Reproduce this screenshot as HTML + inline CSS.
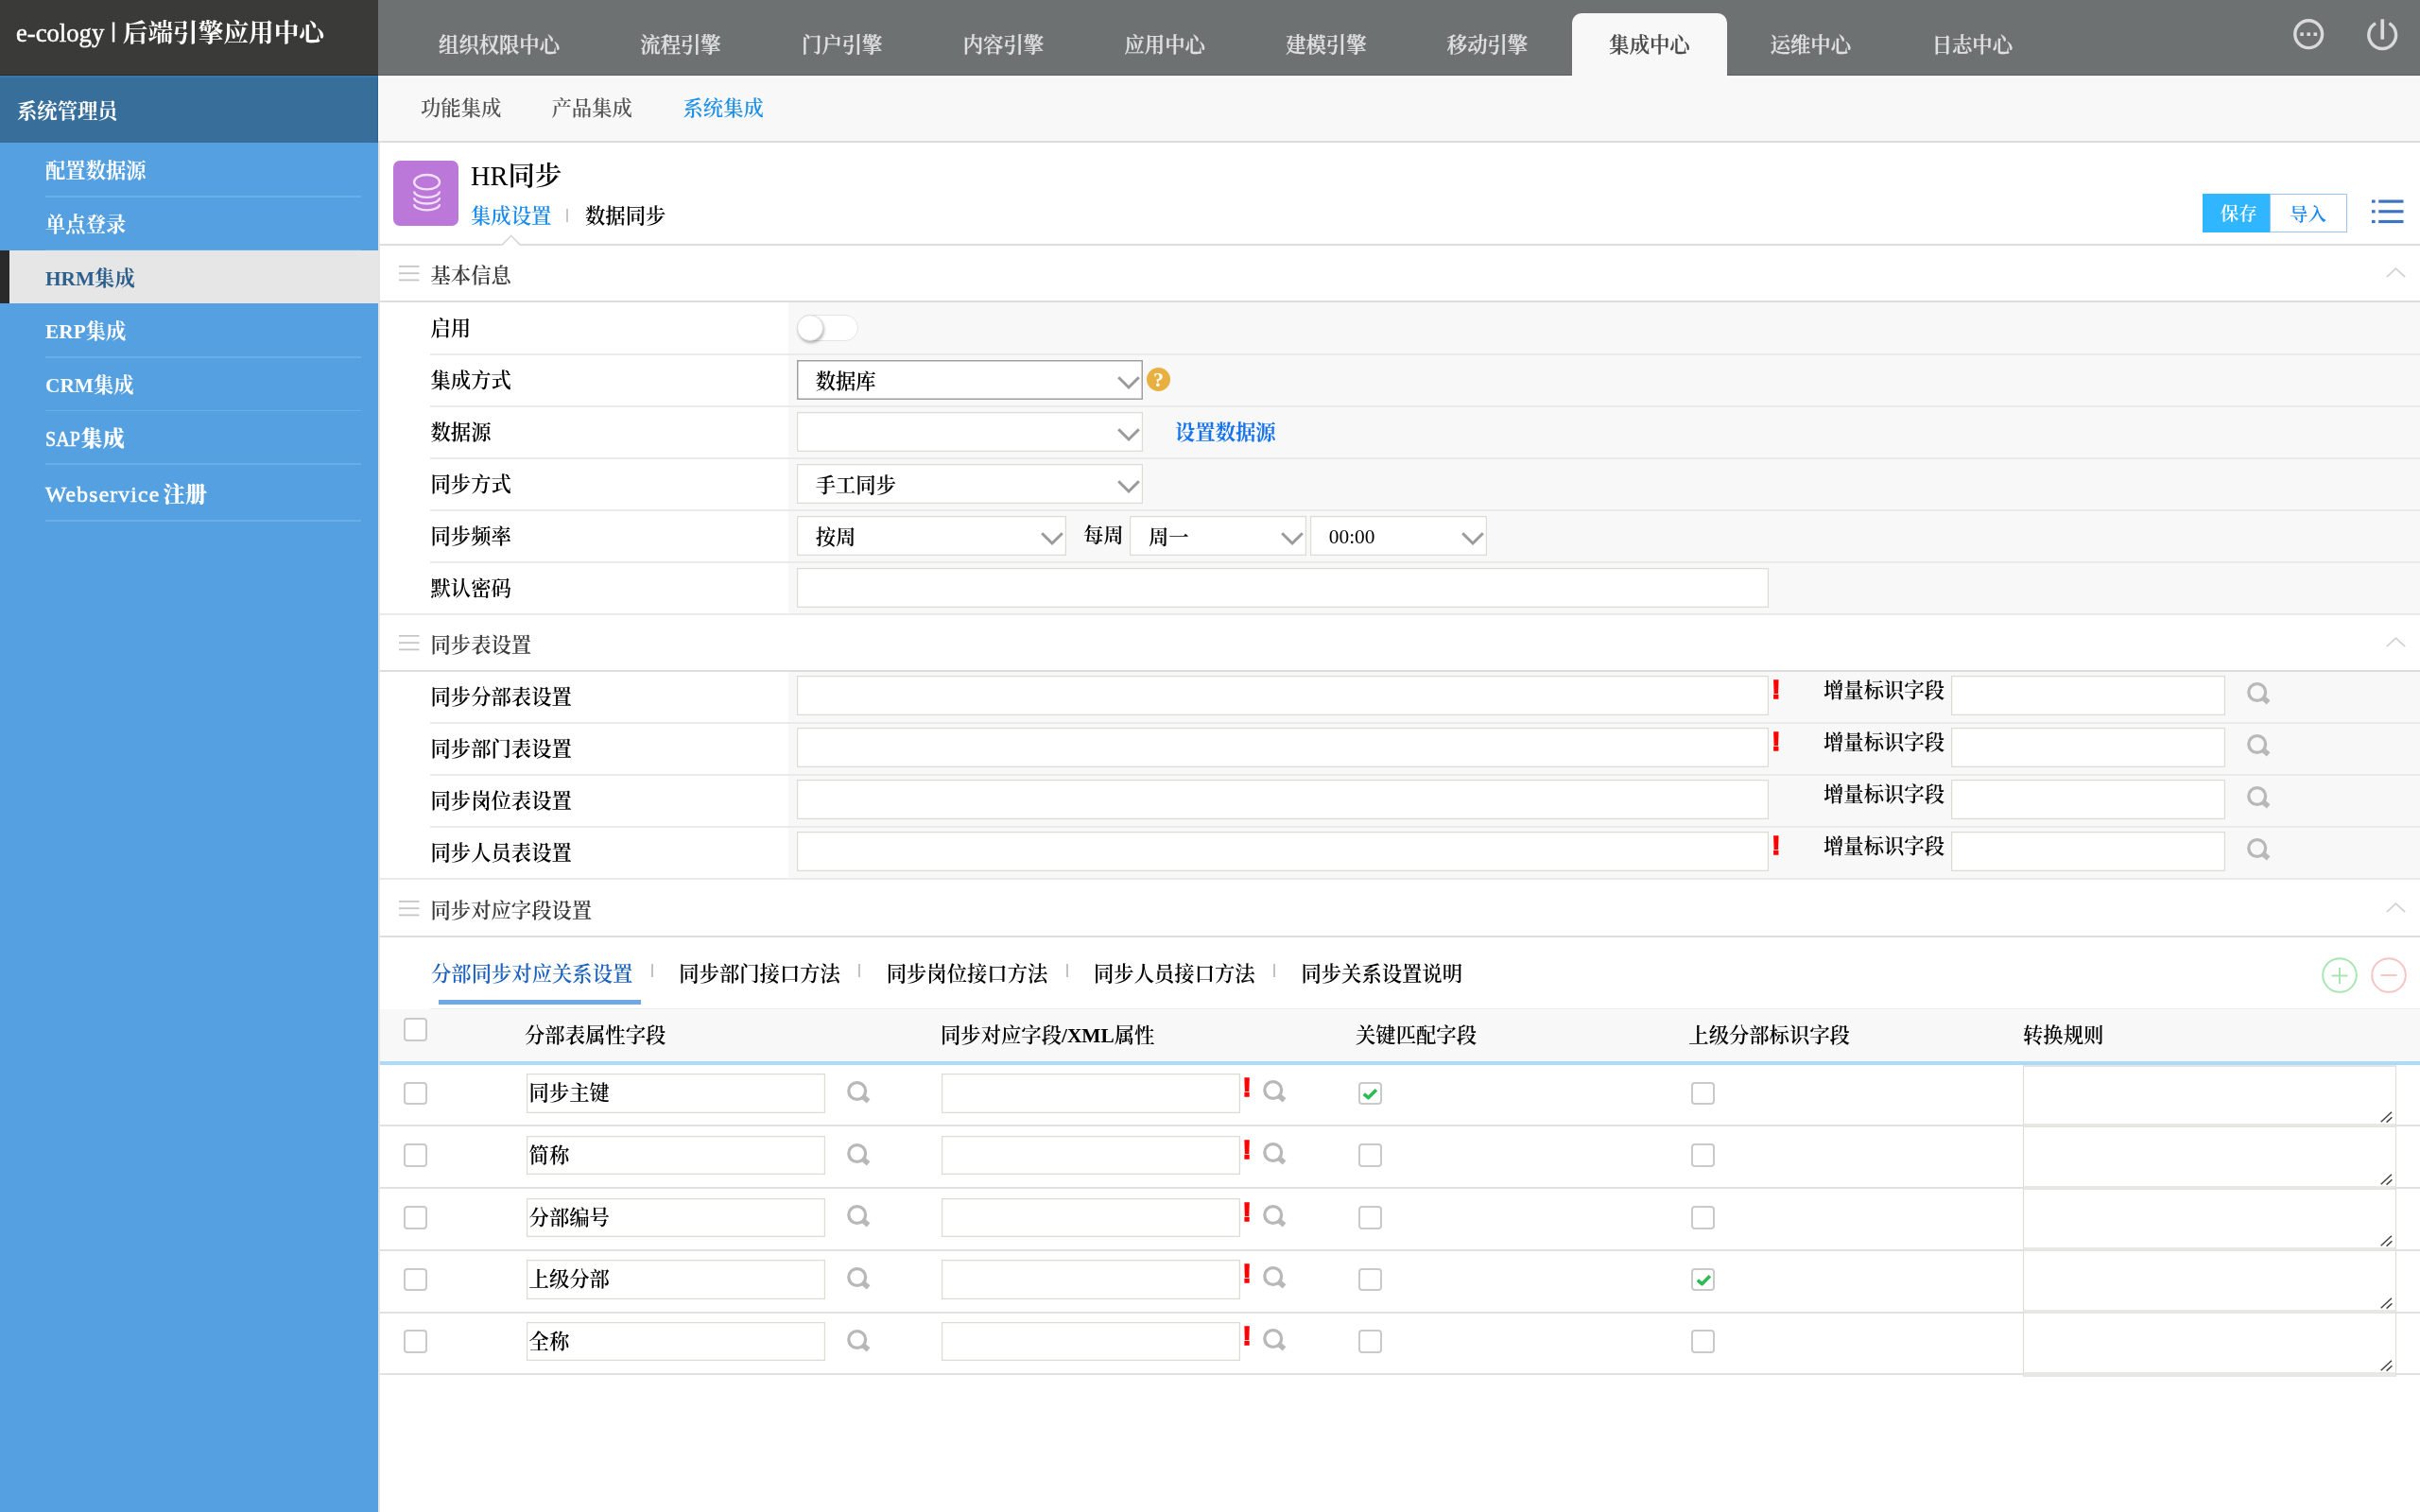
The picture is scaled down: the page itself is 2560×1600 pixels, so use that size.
<!DOCTYPE html>
<html lang="zh-CN">
<head>
<meta charset="utf-8">
<title>HR同步</title>
<style>
html,body{margin:0;padding:0;width:2560px;height:1600px;overflow:hidden;background:#fff;}
body{font-family:"Liberation Serif","Noto Serif CJK SC",serif;font-size:21.33px;color:#000;position:relative;font-weight:600;}
*{box-sizing:border-box;}
#wrap{position:absolute;left:0;top:0;width:2560px;height:1600px;will-change:transform;}
div,span{white-space:nowrap;}
i.l{font-style:normal;font-weight:400;}
#logo em{font-style:normal;font-weight:700;}
.a{position:absolute;}
svg{position:absolute;overflow:visible;}
/* header */
#logo{position:absolute;left:0;top:0;width:400px;height:80px;background:#3a3a38;color:#fff;font-size:26.67px;border-bottom:1px solid #2c2a26;}
#logo span{position:absolute;left:17px;top:15px;line-height:40px;}
#topnav{position:absolute;left:400px;top:0;width:2160px;height:80px;background:#6e7172;border-bottom:1px solid #5c5f60;z-index:3;}
#topnav .it{position:absolute;top:14px;height:66px;line-height:68px;text-align:center;color:#e0e0e0;font-size:21.33px;-webkit-text-stroke:0.25px #e0e0e0;}
#topnav .it.on{background:#f8f8f8;color:#4a4a4a;-webkit-text-stroke:0.25px #4a4a4a;border-radius:10px 10px 0 0;height:68px;}
/* sidebar */
#side{position:absolute;left:0;top:80px;width:400px;height:1520px;background:#54a0e0;}
#admin{position:absolute;left:0;top:0;width:400px;height:71.4px;background:#386e9a;color:#fff;font-weight:bold;line-height:73px;padding-left:18px;border-top:2px solid #3a77ae;border-right:1.5px solid #2b6198;}
#menu{position:absolute;left:0;top:71.4px;width:400px;}
#menu .mi{height:56.7px;position:relative;color:#fff;font-weight:bold;line-height:60px;padding-left:48px;}
#menu .mi:after{content:"";position:absolute;left:48px;right:18px;bottom:-0.5px;height:1.6px;background:#68afe9;}
#menu .mi.on{background:#e6e6e6;color:#2d5f8c;border-left:10px solid #2a2a2a;padding-left:38px;}
#menu .mi.on:after{display:none;}
#menu .lat{display:inline-block;font-size:23.6px;font-weight:normal;-webkit-text-stroke:0.55px #fff;line-height:30px;vertical-align:baseline;}
#menu .lat i{display:inline-block;font-style:normal;transform-origin:0 50%;}
/* subnav */
#subnav{position:absolute;left:400px;top:80px;width:2160px;height:71.4px;background:#f8f8f8;border-bottom:2px solid #dcdcdc;border-top:2px solid #fff;}
#subnav span{position:absolute;top:-2px;line-height:71px;color:#555;}
#subnav span.on{color:#1e90e6;}
#main{position:absolute;left:400px;top:151.4px;width:2160px;height:1449px;background:#fff;border-left:2px solid #e4e4e4;}
.hline{position:absolute;left:402px;right:0;height:2px;background:#dddddd;}
.sline{position:absolute;left:455px;right:0;height:1px;background:#eaeaea;border-bottom:1px solid rgba(238,238,238,0.45);box-sizing:content-box;}
.vcell{position:absolute;left:834px;right:0;background:#f8f8f8;}
.lbl{position:absolute;left:455.5px;line-height:30px;}
.sect{position:absolute;left:455.5px;line-height:30px;color:#3c3c3c;}
.inp{position:absolute;background:#fff;box-shadow:inset 0 0 0 1.2px #dcdcd4;}
.inp span{position:absolute;left:18px;top:50%;line-height:30px;margin-top:-12.6px;}
.cb{position:absolute;width:24.8px;height:24.8px;border:2px solid #cacaca;border-radius:4px;background:#fff;}
.ex{position:absolute;font-family:"Liberation Sans",sans-serif;font-weight:bold;color:#ff0000;font-size:27.6px;line-height:30px;width:8px;text-align:center;-webkit-text-stroke:1.4px #ff0000;}
.th{position:absolute;line-height:30px;top:1080.6px;}
.tab{position:absolute;line-height:30px;top:1015.5px;}
.tsep{position:absolute;top:1020px;width:2px;height:14px;background:#c2c2c2;}
</style>
</head>
<body>
<div id="wrap">
<div id="logo"><span><i class="l" style="-webkit-text-stroke:0.45px #fff">e-cology</i><b style="display:inline-block;width:19.5px;text-align:center;font-size:21px;font-weight:bold;position:relative;top:-5px;-webkit-text-stroke:0.9px #fff">|</b><em>后端引擎应用中心</em></span></div>
<div id="topnav">
<div class="it" style="left:21.4px;width:213.3px">组织权限中心</div>
<div class="it" style="left:234.7px;width:170.7px">流程引擎</div>
<div class="it" style="left:405.4px;width:170.7px">门户引擎</div>
<div class="it" style="left:576.1px;width:170.7px">内容引擎</div>
<div class="it" style="left:746.8px;width:170.7px">应用中心</div>
<div class="it" style="left:917.5px;width:170.7px">建模引擎</div>
<div class="it" style="left:1088.2px;width:170.7px">移动引擎</div>
<div class="it on" style="left:1263px;width:164px">集成中心</div>
<div class="it" style="left:1430px;width:170.7px">运维中心</div>
<div class="it" style="left:1601px;width:170.7px">日志中心</div>
<svg style="left:2025.8px;top:19.8px" width="32.4" height="32.4" viewBox="0 0 32.4 32.4"><circle cx="16.2" cy="16.2" r="14.4" fill="none" stroke="#dadada" stroke-width="3.4"/><g fill="#dadada"><rect x="7.3" y="14.4" width="3.6" height="3.6"/><rect x="14.4" y="14.4" width="3.6" height="3.6"/><rect x="21.5" y="14.4" width="3.6" height="3.6"/></g></svg>
<svg style="left:2103.7px;top:19.5px" width="32.4" height="33" viewBox="0 0 32.4 33"><path d="M9.0,4.6 A14.4,14.4 0 1 0 23.4,4.6" fill="none" stroke="#dadada" stroke-width="3.4"/><rect x="14.4" y="0.3" width="3.7" height="21.4" fill="#dadada"/></svg>
</div>
<div id="side"><div id="admin">系统管理员</div><div id="menu">
<div class="mi">配置数据源</div><div class="mi">单点登录</div><div class="mi on">HRM集成</div><div class="mi">ERP集成</div><div class="mi">CRM集成</div>
<div class="mi" style="line-height:58px"><span class="lat" style="width:37.6px"><i style="transform:scaleX(.85)">SAP</i></span><b style="font-size:23.1px">集成</b></div>
<div class="mi" style="height:60px;line-height:62.5px"><span class="lat" style="width:124.6px;letter-spacing:1.2px"><i>Webservice</i></span><b style="font-size:23.1px">注册</b></div>
</div></div>
<div id="subnav"><span style="left:45px">功能集成</span><span style="left:183.5px">产品集成</span><span class="on" style="left:322.5px">系统集成</span></div>
<div id="main"></div>
<div class="a" style="left:416px;top:170px;width:69.4px;height:69.4px;border-radius:7px;background:#bb78d8"></div>
<svg style="left:416px;top:170px" width="69.4" height="69.4" viewBox="0 0 69.4 69.4"><g fill="none" stroke="#f2e0fa" stroke-width="2.3"><ellipse cx="35.6" cy="22.7" rx="13.5" ry="7.7"/><path d="M22.1,32.6 A13.5,6.2 0 0 0 49.1,32.6"/><path d="M22.1,39.3 A13.5,6.2 0 0 0 49.1,39.3"/><path d="M22.1,46.2 A13.5,6.2 0 0 0 49.1,46.2"/></g></svg>
<div class="a" style="left:498px;top:166.6px;font-size:28.44px;line-height:40px"><i class="l">HR</i>同步</div>
<div class="a" style="left:498px;top:214.3px;line-height:30px;color:#1a8cf0">集成设置</div>
<div class="a" style="left:598.8px;top:220.5px;width:1.8px;height:14px;background:#c8c8c8"></div>
<div class="a" style="left:619px;top:214.3px;line-height:30px">数据同步</div>
<div class="hline" style="top:257.7px"></div>
<svg style="left:530px;top:247.5px" width="22" height="13" viewBox="0 0 22 13"><path d="M1.2,12.4 L10.7,2 L20.2,12.4 Z" fill="#fff"/><polyline points="1.6,10.6 10.7,1.4 19.8,10.6" fill="none" stroke="#d9d9d9" stroke-width="1.7"/></svg>
<div class="a" style="left:2330px;top:205px;width:70.5px;height:40.5px;background:#30b5ff;color:#fff;text-align:center;line-height:43px;font-size:19.56px;padding-left:6px">保存</div>
<div class="a" style="left:2400.5px;top:205px;width:82px;height:40.5px;background:#fff;border:1.8px solid #9cc4ee;color:#1a88f0;text-align:center;line-height:43.5px;font-size:19.56px">导入</div>
<svg style="left:2508.5px;top:211.3px" width="33.5" height="26" viewBox="0 0 33.5 26"><g fill="#3f74c0"><rect x="0" y="0.5" width="3.6" height="3.2"/><rect x="7.2" y="0.5" width="26.3" height="3.2"/><rect x="0" y="11.2" width="3.6" height="3.2"/><rect x="7.2" y="11.2" width="26.3" height="3.2"/><rect x="0" y="21.9" width="3.6" height="3.2"/><rect x="7.2" y="21.9" width="26.3" height="3.2"/></g></svg>
<svg style="left:421.5px;top:281.0px" width="21.5" height="17" viewBox="0 0 21.5 17"><g fill="#c6c6c6"><rect x="0" y="0" width="21.5" height="1.8"/><rect x="0" y="7.3" width="21.5" height="1.8"/><rect x="0" y="14.5" width="21.5" height="1.8"/></g></svg>
<div class="sect" style="top:277.2px">基本信息</div>
<svg style="left:2524px;top:283.1px" width="21" height="11" viewBox="0 0 21 11"><polyline points="0.8,10.2 10.5,1.2 20.2,10.2" fill="none" stroke="#d2d2d2" stroke-width="1.8"/></svg>
<div class="hline" style="top:318.40000000000003px"></div>
<div class="vcell" style="top:320.3px;height:330.6px"></div>
<div class="lbl" style="top:332.7px">启用</div>
<div class="sline" style="top:374px"></div>
<div class="lbl" style="top:387.8px">集成方式</div>
<div class="sline" style="top:429px"></div>
<div class="lbl" style="top:442.9px">数据源</div>
<div class="sline" style="top:484px"></div>
<div class="lbl" style="top:497.9px">同步方式</div>
<div class="sline" style="top:539px"></div>
<div class="lbl" style="top:553.0px">同步频率</div>
<div class="sline" style="top:594px"></div>
<div class="lbl" style="top:608.1px">默认密码</div>
<div class="sline" style="top:649px;left:402px"></div>
<div class="a" style="left:843.3px;top:332.8px;width:65px;height:27.8px;border-radius:14px;background:#fff;border:1.6px solid #e2e6e2"></div>
<div class="a" style="left:843.3px;top:332.8px;width:27.8px;height:27.8px;border-radius:14px;background:#fff;border:1px solid #dcdcdc;box-shadow:1px 2px 3px rgba(0,0,0,0.28)"></div>
<div class="inp" style="left:843.2px;top:380.9px;width:365.8px;height:41.8px;box-shadow:inset 0 0 0 1.5px #a0a0a0;"><span style="left:19.5px">数据库</span><svg style="left:338.40000000000003px;top:17.1px" width="24" height="14" viewBox="0 0 24 14"><polyline points="1.2,1.2 12,12 22.8,1.2" fill="none" stroke="#9a9a9a" stroke-width="3"/></svg></div>
<div class="a" style="left:1212.9px;top:389.2px;width:25px;height:25px;border-radius:50%;background:#e8b040;color:#fff;font-family:'Liberation Serif',serif;font-weight:bold;font-size:22px;line-height:25px;text-align:center">?</div>
<div class="inp" style="left:843.2px;top:436.0px;width:365.8px;height:41.8px;"><svg style="left:338.40000000000003px;top:17.1px" width="24" height="14" viewBox="0 0 24 14"><polyline points="1.2,1.2 12,12 22.8,1.2" fill="none" stroke="#9a9a9a" stroke-width="3"/></svg></div>
<div class="a" style="left:1243px;top:442.5px;line-height:30px;color:#1673ee;font-weight:bold">设置数据源</div>
<div class="inp" style="left:843.2px;top:491.1px;width:365.8px;height:41.8px;"><span style="left:19.5px">手工同步</span><svg style="left:338.40000000000003px;top:17.1px" width="24" height="14" viewBox="0 0 24 14"><polyline points="1.2,1.2 12,12 22.8,1.2" fill="none" stroke="#9a9a9a" stroke-width="3"/></svg></div>
<div class="inp" style="left:843.2px;top:546.2px;width:285.3px;height:41.8px;"><span style="left:19.5px">按周</span><svg style="left:257.90000000000003px;top:17.1px" width="24" height="14" viewBox="0 0 24 14"><polyline points="1.2,1.2 12,12 22.8,1.2" fill="none" stroke="#9a9a9a" stroke-width="3"/></svg></div>
<div class="a" style="left:1146px;top:551.6px;line-height:30px">每周</div>
<div class="inp" style="left:1195.4px;top:546.2px;width:186.6px;height:41.8px;"><span style="left:19.5px">周一</span><svg style="left:159.2px;top:17.1px" width="24" height="14" viewBox="0 0 24 14"><polyline points="1.2,1.2 12,12 22.8,1.2" fill="none" stroke="#9a9a9a" stroke-width="3"/></svg></div>
<div class="inp" style="left:1386.3px;top:546.2px;width:186.7px;height:41.8px;"><span style="left:19.5px"><i class="l" style="position:relative;top:-1.5px">00:00</i></span><svg style="left:159.29999999999998px;top:17.1px" width="24" height="14" viewBox="0 0 24 14"><polyline points="1.2,1.2 12,12 22.8,1.2" fill="none" stroke="#9a9a9a" stroke-width="3"/></svg></div>
<div class="inp" style="left:843.2px;top:601.3px;width:1028px;height:41.8px"></div>
<svg style="left:421.5px;top:671.9px" width="21.5" height="17" viewBox="0 0 21.5 17"><g fill="#c6c6c6"><rect x="0" y="0" width="21.5" height="1.8"/><rect x="0" y="7.3" width="21.5" height="1.8"/><rect x="0" y="14.5" width="21.5" height="1.8"/></g></svg>
<div class="sect" style="top:668.1px">同步表设置</div>
<svg style="left:2524px;top:674.0px" width="21" height="11" viewBox="0 0 21 11"><polyline points="0.8,10.2 10.5,1.2 20.2,10.2" fill="none" stroke="#d2d2d2" stroke-width="1.8"/></svg>
<div class="hline" style="top:709.3000000000001px"></div>
<div class="vcell" style="top:711.2px;height:220.0px"></div>
<div class="lbl" style="top:723.3px">同步分部表设置</div>
<div class="sline" style="top:764px"></div>
<div class="inp" style="left:843.2px;top:715.4px;width:1028px;height:41.8px"></div>
<div class="ex" style="left:1874.2px;top:715.2px">!</div>
<div class="a" style="left:1929px;top:716.0px;line-height:30px">增量标识字段</div>
<div class="inp" style="left:2064.4px;top:715.4px;width:290px;height:41.8px"></div>
<svg style="left:2377.2px;top:721.9px" width="26" height="26" viewBox="0 0 26 26"><circle cx="10.7" cy="10.5" r="8.9" fill="none" stroke="#b8b8b8" stroke-width="3.3"/><line x1="16.4" y1="16" x2="22.6" y2="21.4" stroke="#b8b8b8" stroke-width="5.6"/></svg>
<div class="lbl" style="top:778.3px">同步部门表设置</div>
<div class="sline" style="top:819px"></div>
<div class="inp" style="left:843.2px;top:770.4px;width:1028px;height:41.8px"></div>
<div class="ex" style="left:1874.2px;top:770.2px">!</div>
<div class="a" style="left:1929px;top:771.0px;line-height:30px">增量标识字段</div>
<div class="inp" style="left:2064.4px;top:770.4px;width:290px;height:41.8px"></div>
<svg style="left:2377.2px;top:776.9px" width="26" height="26" viewBox="0 0 26 26"><circle cx="10.7" cy="10.5" r="8.9" fill="none" stroke="#b8b8b8" stroke-width="3.3"/><line x1="16.4" y1="16" x2="22.6" y2="21.4" stroke="#b8b8b8" stroke-width="5.6"/></svg>
<div class="lbl" style="top:833.3px">同步岗位表设置</div>
<div class="sline" style="top:874px"></div>
<div class="inp" style="left:843.2px;top:825.4px;width:1028px;height:41.8px"></div>
<div class="a" style="left:1929px;top:826.0px;line-height:30px">增量标识字段</div>
<div class="inp" style="left:2064.4px;top:825.4px;width:290px;height:41.8px"></div>
<svg style="left:2377.2px;top:831.9px" width="26" height="26" viewBox="0 0 26 26"><circle cx="10.7" cy="10.5" r="8.9" fill="none" stroke="#b8b8b8" stroke-width="3.3"/><line x1="16.4" y1="16" x2="22.6" y2="21.4" stroke="#b8b8b8" stroke-width="5.6"/></svg>
<div class="lbl" style="top:888.3px">同步人员表设置</div>
<div class="sline" style="top:929px;left:402px"></div>
<div class="inp" style="left:843.2px;top:880.4px;width:1028px;height:41.8px"></div>
<div class="ex" style="left:1874.2px;top:880.2px">!</div>
<div class="a" style="left:1929px;top:881.0px;line-height:30px">增量标识字段</div>
<div class="inp" style="left:2064.4px;top:880.4px;width:290px;height:41.8px"></div>
<svg style="left:2377.2px;top:886.9px" width="26" height="26" viewBox="0 0 26 26"><circle cx="10.7" cy="10.5" r="8.9" fill="none" stroke="#b8b8b8" stroke-width="3.3"/><line x1="16.4" y1="16" x2="22.6" y2="21.4" stroke="#b8b8b8" stroke-width="5.6"/></svg>
<svg style="left:421.5px;top:952.5px" width="21.5" height="17" viewBox="0 0 21.5 17"><g fill="#c6c6c6"><rect x="0" y="0" width="21.5" height="1.8"/><rect x="0" y="7.3" width="21.5" height="1.8"/><rect x="0" y="14.5" width="21.5" height="1.8"/></g></svg>
<div class="sect" style="top:948.7px">同步对应字段设置</div>
<svg style="left:2524px;top:954.6px" width="21" height="11" viewBox="0 0 21 11"><polyline points="0.8,10.2 10.5,1.2 20.2,10.2" fill="none" stroke="#d2d2d2" stroke-width="1.8"/></svg>
<div class="hline" style="top:990.3000000000001px"></div>
<div class="tab" style="left:456px;color:#1c62be;">分部同步对应关系设置</div>
<div class="tsep" style="left:688.6px"></div>
<div class="tab" style="left:718.3px;">同步部门接口方法</div>
<div class="tsep" style="left:908.3px"></div>
<div class="tab" style="left:937.7px;">同步岗位接口方法</div>
<div class="tsep" style="left:1127.7px"></div>
<div class="tab" style="left:1157px;">同步人员接口方法</div>
<div class="tsep" style="left:1347.0px"></div>
<div class="tab" style="left:1376.4px;">同步关系设置说明</div>
<div class="a" style="left:464px;top:1057.8px;width:213.7px;height:5px;background:#6fa8e6"></div>
<svg style="left:2456.4px;top:1012.7px" width="38" height="38" viewBox="0 0 38 38"><circle cx="19" cy="19" r="17.8" fill="none" stroke="#a9e6b4" stroke-width="2"/><path d="M10.5,19.5 H27.5 M19,11 V28" stroke="#a9e6b4" stroke-width="2" fill="none"/></svg>
<svg style="left:2507.9px;top:1012.7px" width="38" height="38" viewBox="0 0 38 38"><circle cx="19" cy="19" r="17.8" fill="none" stroke="#f5c4c4" stroke-width="2"/><path d="M10.5,19 H27.5" stroke="#f5c4c4" stroke-width="2" fill="none"/></svg>
<div class="a" style="left:455px;right:0;top:1066.5px;height:1.5px;background:#ececec"></div>
<div class="a" style="left:402px;right:0;top:1067.5px;height:56px;background:#f8f8f8"></div>
<div class="a" style="left:402px;right:0;top:1123.2px;height:3.7px;background:#abdafb"></div>
<div class="cb" style="left:426.8px;top:1076.9px"></div>
<div class="th" style="left:555px">分部表属性字段</div>
<div class="th" style="left:995px">同步对应字段<i class="l" style="font-weight:bold">/XML</i>属性</div>
<div class="th" style="left:1434px">关键匹配字段</div>
<div class="th" style="left:1786.3px">上级分部标识字段</div>
<div class="th" style="left:2140px">转换规则</div>
<div class="a" style="left:402px;right:0;top:1190px;height:2px;background:#e1e1e1"></div>
<div class="cb" style="left:426.8px;top:1144.7px"></div>
<div class="inp" style="left:557.1px;top:1136.4px;width:315.5px;height:41.2px"><span style="left:2.5px;margin-top:-14.8px">同步主键</span></div>
<svg style="left:896.4px;top:1143.8px" width="26" height="26" viewBox="0 0 26 26"><circle cx="10.7" cy="10.5" r="8.9" fill="none" stroke="#b8b8b8" stroke-width="3.3"/><line x1="16.4" y1="16" x2="22.6" y2="21.4" stroke="#b8b8b8" stroke-width="5.6"/></svg>
<div class="inp" style="left:996.1px;top:1136.4px;width:315.6px;height:41.2px"></div>
<div class="ex" style="left:1314.6px;top:1136.2px">!</div>
<svg style="left:1335.6px;top:1143.3px" width="26" height="26" viewBox="0 0 26 26"><circle cx="10.7" cy="10.5" r="8.9" fill="none" stroke="#b8b8b8" stroke-width="3.3"/><line x1="16.4" y1="16" x2="22.6" y2="21.4" stroke="#b8b8b8" stroke-width="5.6"/></svg>
<div class="cb" style="left:1436.9px;top:1144.7px"><svg style="left:2.5px;top:4.5px" width="16" height="13" viewBox="0 0 16 13"><polyline points="1.8,6.6 6.4,10.7 14.9,2.2" fill="none" stroke="#2fba55" stroke-width="3.6" stroke-linejoin="round"/></svg></div>
<div class="cb" style="left:1789.2px;top:1144.7px"></div>
<div class="a" style="left:2139.8px;top:1126.9px;width:395.4px;height:67.1px;background:#fff;border:1px solid #dcdcd4;border-top:2px solid #e6e6e0;border-bottom:5px solid #e8e8e4"><svg style="right:3px;bottom:1px" width="13" height="12" viewBox="0 0 13 12"><path d="M0.7,11.2 L12,0.8 M6.6,11.6 L12.4,6.2" stroke="#444" stroke-width="1.5" fill="none"/></svg></div>
<div class="a" style="left:402px;right:0;top:1256px;height:2px;background:#e1e1e1"></div>
<div class="cb" style="left:426.8px;top:1210.4px"></div>
<div class="inp" style="left:557.1px;top:1202.1px;width:315.5px;height:41.2px"><span style="left:2.5px;margin-top:-14.8px">简称</span></div>
<svg style="left:896.4px;top:1209.5px" width="26" height="26" viewBox="0 0 26 26"><circle cx="10.7" cy="10.5" r="8.9" fill="none" stroke="#b8b8b8" stroke-width="3.3"/><line x1="16.4" y1="16" x2="22.6" y2="21.4" stroke="#b8b8b8" stroke-width="5.6"/></svg>
<div class="inp" style="left:996.1px;top:1202.1px;width:315.6px;height:41.2px"></div>
<div class="ex" style="left:1314.6px;top:1201.9px">!</div>
<svg style="left:1335.6px;top:1209.0px" width="26" height="26" viewBox="0 0 26 26"><circle cx="10.7" cy="10.5" r="8.9" fill="none" stroke="#b8b8b8" stroke-width="3.3"/><line x1="16.4" y1="16" x2="22.6" y2="21.4" stroke="#b8b8b8" stroke-width="5.6"/></svg>
<div class="cb" style="left:1436.9px;top:1210.4px"></div>
<div class="cb" style="left:1789.2px;top:1210.4px"></div>
<div class="a" style="left:2139.8px;top:1191.0px;width:395.4px;height:68.7px;background:#fff;border:1px solid #dcdcd4;border-top:2px solid #e6e6e0;border-bottom:5px solid #e8e8e4"><svg style="right:3px;bottom:1px" width="13" height="12" viewBox="0 0 13 12"><path d="M0.7,11.2 L12,0.8 M6.6,11.6 L12.4,6.2" stroke="#444" stroke-width="1.5" fill="none"/></svg></div>
<div class="a" style="left:402px;right:0;top:1322px;height:2px;background:#e1e1e1"></div>
<div class="cb" style="left:426.8px;top:1276.1px"></div>
<div class="inp" style="left:557.1px;top:1267.8px;width:315.5px;height:41.2px"><span style="left:2.5px;margin-top:-14.8px">分部编号</span></div>
<svg style="left:896.4px;top:1275.2px" width="26" height="26" viewBox="0 0 26 26"><circle cx="10.7" cy="10.5" r="8.9" fill="none" stroke="#b8b8b8" stroke-width="3.3"/><line x1="16.4" y1="16" x2="22.6" y2="21.4" stroke="#b8b8b8" stroke-width="5.6"/></svg>
<div class="inp" style="left:996.1px;top:1267.8px;width:315.6px;height:41.2px"></div>
<div class="ex" style="left:1314.6px;top:1267.6px">!</div>
<svg style="left:1335.6px;top:1274.7px" width="26" height="26" viewBox="0 0 26 26"><circle cx="10.7" cy="10.5" r="8.9" fill="none" stroke="#b8b8b8" stroke-width="3.3"/><line x1="16.4" y1="16" x2="22.6" y2="21.4" stroke="#b8b8b8" stroke-width="5.6"/></svg>
<div class="cb" style="left:1436.9px;top:1276.1px"></div>
<div class="cb" style="left:1789.2px;top:1276.1px"></div>
<div class="a" style="left:2139.8px;top:1256.7px;width:395.4px;height:68.6px;background:#fff;border:1px solid #dcdcd4;border-top:2px solid #e6e6e0;border-bottom:5px solid #e8e8e4"><svg style="right:3px;bottom:1px" width="13" height="12" viewBox="0 0 13 12"><path d="M0.7,11.2 L12,0.8 M6.6,11.6 L12.4,6.2" stroke="#444" stroke-width="1.5" fill="none"/></svg></div>
<div class="a" style="left:402px;right:0;top:1388px;height:2px;background:#e1e1e1"></div>
<div class="cb" style="left:426.8px;top:1341.7px"></div>
<div class="inp" style="left:557.1px;top:1333.4px;width:315.5px;height:41.2px"><span style="left:2.5px;margin-top:-14.8px">上级分部</span></div>
<svg style="left:896.4px;top:1340.8px" width="26" height="26" viewBox="0 0 26 26"><circle cx="10.7" cy="10.5" r="8.9" fill="none" stroke="#b8b8b8" stroke-width="3.3"/><line x1="16.4" y1="16" x2="22.6" y2="21.4" stroke="#b8b8b8" stroke-width="5.6"/></svg>
<div class="inp" style="left:996.1px;top:1333.4px;width:315.6px;height:41.2px"></div>
<div class="ex" style="left:1314.6px;top:1333.2px">!</div>
<svg style="left:1335.6px;top:1340.3px" width="26" height="26" viewBox="0 0 26 26"><circle cx="10.7" cy="10.5" r="8.9" fill="none" stroke="#b8b8b8" stroke-width="3.3"/><line x1="16.4" y1="16" x2="22.6" y2="21.4" stroke="#b8b8b8" stroke-width="5.6"/></svg>
<div class="cb" style="left:1436.9px;top:1341.7px"></div>
<div class="cb" style="left:1789.2px;top:1341.7px"><svg style="left:2.5px;top:4.5px" width="16" height="13" viewBox="0 0 16 13"><polyline points="1.8,6.6 6.4,10.7 14.9,2.2" fill="none" stroke="#2fba55" stroke-width="3.6" stroke-linejoin="round"/></svg></div>
<div class="a" style="left:2139.8px;top:1322.3px;width:395.4px;height:68.7px;background:#fff;border:1px solid #dcdcd4;border-top:2px solid #e6e6e0;border-bottom:5px solid #e8e8e4"><svg style="right:3px;bottom:1px" width="13" height="12" viewBox="0 0 13 12"><path d="M0.7,11.2 L12,0.8 M6.6,11.6 L12.4,6.2" stroke="#444" stroke-width="1.5" fill="none"/></svg></div>
<div class="a" style="left:402px;right:0;top:1453px;height:2px;background:#e1e1e1"></div>
<div class="cb" style="left:426.8px;top:1407.4px"></div>
<div class="inp" style="left:557.1px;top:1399.1px;width:315.5px;height:41.2px"><span style="left:2.5px;margin-top:-14.8px">全称</span></div>
<svg style="left:896.4px;top:1406.5px" width="26" height="26" viewBox="0 0 26 26"><circle cx="10.7" cy="10.5" r="8.9" fill="none" stroke="#b8b8b8" stroke-width="3.3"/><line x1="16.4" y1="16" x2="22.6" y2="21.4" stroke="#b8b8b8" stroke-width="5.6"/></svg>
<div class="inp" style="left:996.1px;top:1399.1px;width:315.6px;height:41.2px"></div>
<div class="ex" style="left:1314.6px;top:1398.9px">!</div>
<svg style="left:1335.6px;top:1406.0px" width="26" height="26" viewBox="0 0 26 26"><circle cx="10.7" cy="10.5" r="8.9" fill="none" stroke="#b8b8b8" stroke-width="3.3"/><line x1="16.4" y1="16" x2="22.6" y2="21.4" stroke="#b8b8b8" stroke-width="5.6"/></svg>
<div class="cb" style="left:1436.9px;top:1407.4px"></div>
<div class="cb" style="left:1789.2px;top:1407.4px"></div>
<div class="a" style="left:2139.8px;top:1388.0px;width:395.4px;height:68.7px;background:#fff;border:1px solid #dcdcd4;border-top:2px solid #e6e6e0;border-bottom:5px solid #e8e8e4"><svg style="right:3px;bottom:1px" width="13" height="12" viewBox="0 0 13 12"><path d="M0.7,11.2 L12,0.8 M6.6,11.6 L12.4,6.2" stroke="#444" stroke-width="1.5" fill="none"/></svg></div>
</div>
</body>
</html>
